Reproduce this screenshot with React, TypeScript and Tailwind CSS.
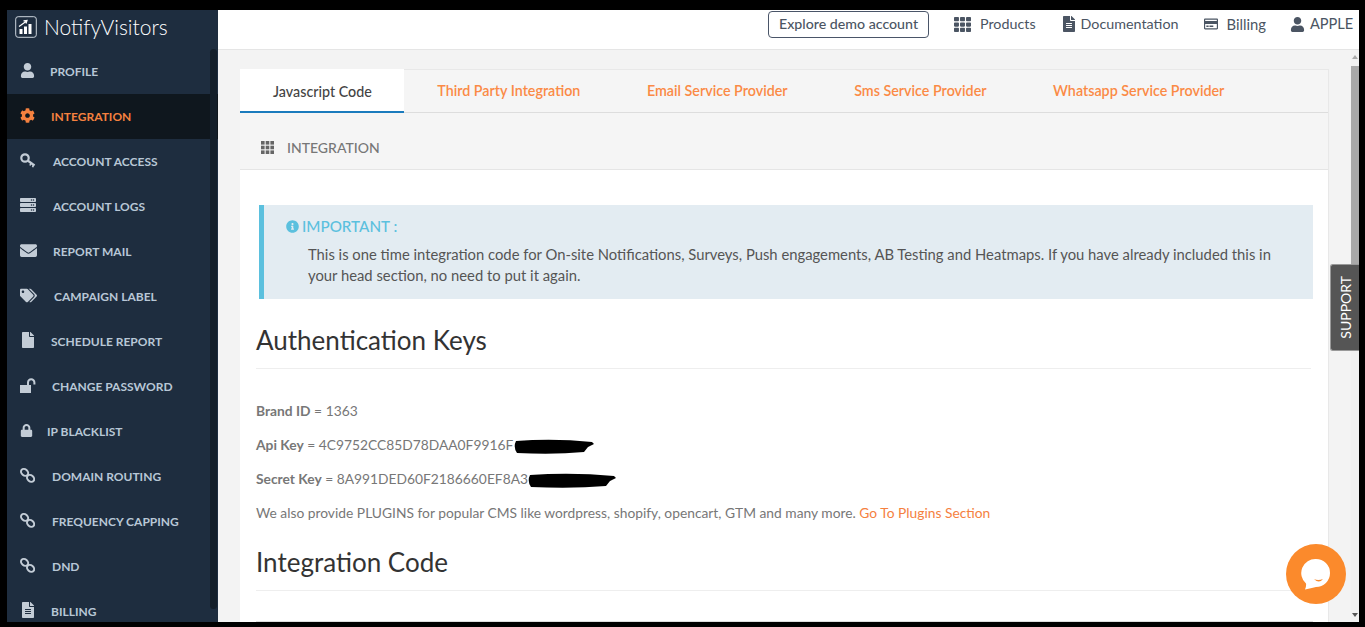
import { FaUser, FaCog, FaServer, FaEnvelope, FaTags, FaFile, FaLock, FaFileAlt, FaTh, FaInfoCircle, FaRegCreditCard } from "react-icons/fa";

function Unlock({ size }: { size: number }) {
  return (
    <svg width={size + 1} height={size} viewBox="0 0 16 15">
      <rect x="0" y="7" width="11" height="8" fill="currentColor" />
      <path d="M8 7 V4.5 A3.2 3.2 0 0 1 14.4 4.5 V6.5" fill="none" stroke="currentColor" strokeWidth="2" />
    </svg>
  );
}

function Key({ size }: { size: number }) {
  return (
    <svg width={size + 1} height={size} viewBox="0 0 16 15" fill="none" stroke="currentColor">
      <circle cx="5" cy="5" r="3.7" strokeWidth="2.2" />
      <path d="M7.8 7.6 L14.5 12.5" strokeWidth="2.4" />
      <path d="M11 10 L10 12.5 M13.5 11.8 L12.6 14.2" strokeWidth="1.6" />
    </svg>
  );
}

function Chain({ size }: { size: number }) {
  return (
    <svg width={size} height={size} viewBox="0 0 15 15" fill="none" stroke="currentColor" strokeWidth="2">
      <ellipse cx="4.6" cy="4.4" rx="3.9" ry="3" transform="rotate(40 4.6 4.4)" />
      <ellipse cx="10.6" cy="10.4" rx="3.9" ry="3" transform="rotate(40 10.6 10.4)" />
    </svg>
  );
}

const menu = [
  { label: "PROFILE", icon: FaUser, box: "w-[30px]", size: 15 },
  { label: "INTEGRATION", icon: FaCog, box: "w-[31px]", size: 15, active: true },
  { label: "ACCOUNT ACCESS", icon: Key, box: "w-[33px]", size: 15 },
  { label: "ACCOUNT LOGS", icon: FaServer, box: "w-[33px]", size: 16 },
  { label: "REPORT MAIL", icon: FaEnvelope, box: "w-[33px]", size: 17 },
  { label: "CAMPAIGN LABEL", icon: FaTags, box: "w-[34px]", size: 17 },
  { label: "SCHEDULE REPORT", icon: FaFile, box: "w-[31px]", size: 16 },
  { label: "CHANGE PASSWORD", icon: Unlock, box: "w-[32px]", size: 15 },
  { label: "IP BLACKLIST", icon: FaLock, box: "w-[27px]", size: 13 },
  { label: "DOMAIN ROUTING", icon: Chain, box: "w-[32px]", size: 15 },
  { label: "FREQUENCY CAPPING", icon: Chain, box: "w-[32px]", size: 15 },
  { label: "DND", icon: Chain, box: "w-[32px]", size: 15 },
  { label: "BILLING", icon: FaFileAlt, box: "w-[31px]", size: 16 },
];

const tabs = ["Third Party Integration", "Email Service Provider", "Sms Service Provider", "Whatsapp Service Provider"];

function Logo() {
  return (
    <svg width="22" height="22" viewBox="0 0 22 22" fill="none">
      <rect x="0.7" y="0.7" width="20.6" height="20.6" rx="2.5" stroke="#cdd5dd" strokeWidth="1" />
      <rect x="4.5" y="13" width="3" height="5" fill="#fff" />
      <rect x="9" y="10.5" width="3" height="7.5" fill="#fff" />
      <rect x="13.5" y="8" width="3" height="10" fill="#fff" />
      <path d="M4 10.5 L11 5.5 M8.5 4.8 L12 4.5 L11 7.5" stroke="#fff" strokeWidth="1.2" />
    </svg>
  );
}

function Scribble({ w }: { w: number }) {
  return (
    <svg className="absolute left-0 top-[-1px]" width={w} height="18" viewBox={`0 0 ${w} 18`}>
      <path d={`M2 3 Q${w / 2} 0 ${w - 2} 4 L${w} 6 L${w - 6} 9 L${w - 10} 14 Q${w / 2} 17 3 15 Q-1 9 2 3 Z`} fill="#000" />
    </svg>
  );
}

export default function App() {
  return (
    <div className="w-[1365px] h-[627px] bg-black pt-[10px] pb-[5px] pl-[7px] pr-[6px] overflow-hidden font-['Lato',sans-serif]">
      <div className="relative flex h-full bg-[#f3f3f3]">
        <aside className="w-[211px] shrink-0 bg-[#1e2d3f] relative overflow-hidden">
          <div className="h-[39px] flex items-center pl-[8px] pb-[6px] gap-[7px]">
            <Logo />
            <span className="text-[21px] leading-none text-white font-light">NotifyVisitors</span>
          </div>
          <nav>
            {menu.map((m) => (
              <div
                key={m.label}
                className={`h-[45px] flex items-center pl-[13px] text-[12px] font-bold ${m.active ? "bg-[#0f171e] text-[#f5813f]" : "text-[#b8c7d6]"}`}
              >
                <span className={`${m.box} shrink-0 -mt-[3px] ${m.active ? "text-[#f5813f]" : "text-[#c3ccd6]"}`}>
                  <m.icon size={m.size} />
                </span>
                {m.label}
              </div>
            ))}
          </nav>
          <div className="absolute right-[1px] top-[39px] h-[560px] w-[7px] rounded bg-[#141f2a]" />
        </aside>

        <div className="flex-1 min-w-0 flex flex-col">
          <header className="h-[40px] shrink-0 bg-white border-b border-[#e5e5e5] flex items-start pl-[550px] text-[14.3px] text-[#4b5563]">
            <button className="mt-[1px] h-[27px] w-[161px] pb-[2px] border border-[#4a5568] rounded-[4px] font-medium text-[14.2px] text-[#4b5563]">Explore demo account</button>
            <span className="ml-[25px] mt-[4px] flex items-center h-[20px] gap-[9px]"><FaTh size={17} />Products</span>
            <span className="ml-[25px] mt-[4px] flex items-center h-[20px] gap-[4px]"><FaFileAlt size={16} />Documentation</span>
            <span className="ml-[25px] mt-[4px] flex items-center h-[20px] gap-[9px] text-[14.8px]"><FaRegCreditCard size={14} />Billing</span>
            <span className="ml-[24px] mt-[4px] flex items-center h-[20px] gap-[5px] text-[14.6px]"><FaUser size={15} />APPLE</span>
          </header>

          <div className="flex flex-1 min-h-0">
            <main className="flex-1 min-w-0 pt-[19px] pl-[22px] pr-[22px] overflow-hidden">
              <div className="bg-white border-r border-b border-[#e8e8e8] h-[700px]">
                <div className="h-[44px] flex bg-[#f5f5f5] border-t border-b border-t-[#e8e8e8] border-b-[#dddddd] text-[14.3px]">
                  <div className="h-[44px] -mt-[1px] w-[164px] shrink-0 pl-[33px] bg-white border-b-2 border-[#1b7bbd] flex items-center font-medium text-[#444] pt-[3px]">Javascript Code</div>
                  {tabs.map((t) => (
                    <div key={t} className="px-[33.25px] flex items-center font-semibold text-[#fb8a45]">{t}</div>
                  ))}
                </div>
                <div className="h-[57px] flex items-center bg-[#f5f5f5] border-b border-[#e5e5e5] pl-[21px] pt-[12px] gap-[13px] text-[14px] font-medium text-[#777]">
                  <svg width="13" height="13" viewBox="0 0 13 13" fill="#666">
                    <rect x="0" y="0" width="3.6" height="3.6" />
                    <rect x="4.7" y="0" width="3.6" height="3.6" />
                    <rect x="9.4" y="0" width="3.6" height="3.6" />
                    <rect x="0" y="4.7" width="3.6" height="3.6" />
                    <rect x="4.7" y="4.7" width="3.6" height="3.6" />
                    <rect x="9.4" y="4.7" width="3.6" height="3.6" />
                    <rect x="0" y="9.4" width="3.6" height="3.6" />
                    <rect x="4.7" y="9.4" width="3.6" height="3.6" />
                    <rect x="9.4" y="9.4" width="3.6" height="3.6" />
                  </svg>
                  INTEGRATION
                </div>
                <div className="pl-[16px] pr-[15px] pt-[35px]">
                  <div className="ml-[3px] h-[94px] bg-[#e3ecf2] border-l-[5px] border-[#5bc0de] pt-[11px] pl-[22px] pr-[30px] text-[14.8px] leading-[21px] text-[#555]">
                    <div className="flex items-center gap-[3px] text-[15.2px] text-[#5bc0de] font-medium"><FaInfoCircle size={13} />IMPORTANT :</div>
                    <p className="pl-[22px] mt-[7px]">This is one time integration code for On-site Notifications, Surveys, Push engagements, AB Testing and Heatmaps. If you have already included this in your head section, no need to put it again.</p>
                  </div>
                  <h2 className="mt-[22px] text-[26px] leading-[38px] text-[#333] pb-[9px] border-b border-[#eeeeee] mr-[2px]">Authentication Keys</h2>
                  <div className="text-[13.8px] text-[#777] leading-[20px]">
                    <p className="mt-[32px]"><b className="font-bold">Brand ID</b> = 1363</p>
                    <p className="mt-[14px]"><b className="font-bold">Api Key</b> = 4C9752CC85D78DAA0F9916F<span className="relative inline-block w-[80px] h-[16px] ml-[1px] align-middle"><Scribble w={80} /></span></p>
                    <p className="mt-[14px]"><b className="font-bold">Secret Key</b> = 8A991DED60F2186660EF8A3<span className="relative inline-block w-[88px] h-[16px] align-middle"><Scribble w={88} /></span></p>
                    <p className="mt-[14px]">We also provide PLUGINS for popular CMS like wordpress, shopify, opencart, GTM and many more. <span className="text-[#f5813f]">Go To Plugins Section</span></p>
                  </div>
                  <h2 className="mt-[20px] text-[26px] leading-[38px] text-[#333] pb-[9px] border-b border-[#eeeeee] mr-[2px]">Integration Code</h2>
                  <div className="mt-[30px] border-t border-[#dddddd]" />
                </div>
              </div>
            </main>
            <div className="w-[8px] shrink-0 bg-[#f1f1f1] relative">
              <svg className="absolute left-[1px] top-[5px]" width="6" height="4" viewBox="0 0 6 4"><path d="M3 0 L6 4 H0 Z" fill="#aaa" /></svg>
              <div className="absolute left-0 top-[16px] w-[8px] h-[240px] bg-[#a9a9a9]" />
              <svg className="absolute left-[1px] bottom-[5px]" width="6" height="4" viewBox="0 0 6 4"><path d="M0 0 H6 L3 4 Z" fill="#555" /></svg>
            </div>
          </div>
        </div>

        <div className="absolute right-0 top-[254px] w-[29px] h-[87px] bg-[#555] border border-r-0 border-[#999] rounded-tl-[3px] rounded-bl-[3px] flex items-center justify-center text-white text-[14px]">
          <span className="[writing-mode:vertical-rl] rotate-180">SUPPORT</span>
        </div>

        <div className="absolute left-[1279px] top-[534px] w-[60px] h-[60px] rounded-full bg-[#fb8a2c] flex items-center justify-center">
          <svg width="30" height="32" viewBox="0 0 30 32">
            <path d="M15 1 A14 14 0 0 1 15 29 Q10 30 4 31.5 Q5.5 28 5 25.5 A14 14 0 0 1 15 1 Z" fill="#fff" />
            <path d="M13 21 Q17 23 22 21 Q18 26 13 21 Z" fill="#fb8a2c" />
          </svg>
        </div>
      </div>
    </div>
  );
}
